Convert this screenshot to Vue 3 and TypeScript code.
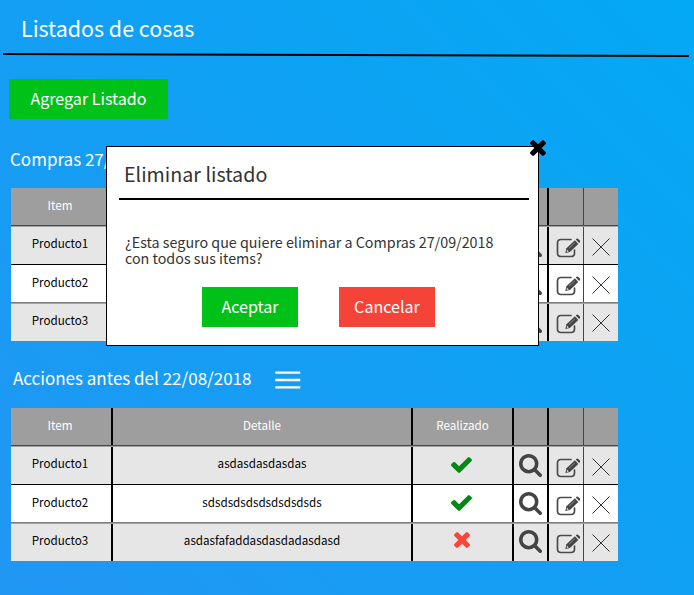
<script setup lang="ts">
interface Item {
  name: string
  detail: string
  done: boolean
}

interface Listing {
  title: string
  items: Item[]
}

const items: Item[] = [
  { name: 'Producto1', detail: 'asdasdasdasdas', done: true },
  { name: 'Producto2', detail: 'sdsdsdsdsdsdsdsdsds', done: true },
  { name: 'Producto3', detail: 'asdasfafaddasdasdadasdasd', done: false },
]

const listings: Listing[] = [
  { title: 'Compras 27/09/2018', items },
  { title: 'Acciones antes del 22/08/2018', items },
]

const crossPath =
  'M1298 1322q0 40-28 68l-136 136q-28 28-68 28t-68-28l-294-294-294 294q-28 28-68 28t-68-28l-136-136q-28-28-28-68t28-68l294-294-294-294q-28-28-28-68t28-68l136-136q28-28 68-28t68 28l294 294 294-294q28-28 68-28t68 28l136 136q28 28 28 68t-28 68l-294 294 294 294q28 28 28 68z'
const checkPath =
  'M1671 566q0 40-28 68l-724 724-136 136q-28 28-68 28t-68-28l-136-136-362-362q-28-28-28-68t28-68l136-136q28-28 68-28t68 28l294 295 656-657q28-28 68-28t68 28l136 136q28 28 28 68z'
const searchPath =
  'M1152 704q0-185-131.500-316.500t-316.500-131.500-316.500 131.500-131.500 316.500 131.500 316.500 316.500 131.500 316.500-131.500 131.500-316.500zm512 832q0 52-38 90t-90 38q-54 0-90-38l-343-342q-179 124-399 124-143 0-273.500-55.500t-225-150-150-225-55.500-273.500 55.500-273.500 150-225 225-150 273.500-55.500 273.500 55.500 225 150 150 225 55.500 273.500q0 220-124 399l343 343q37 37 37 90z'
</script>

<template>
  <main class="page">
    <header class="top">
      <h1>Listados de cosas</h1>
      <svg class="rule" width="694" height="6" viewBox="0 0 694 6">
        <path d="M3 1.900L689 4" stroke="#000" stroke-width="2" />
      </svg>
    </header>

    <button class="btn add">Agregar Listado</button>

    <section v-for="(listing, index) in listings" :key="listing.title" class="listing" :class="{ second: index === 1 }">
      <div class="listing-head">
        <h2>{{ listing.title }}</h2>
        <svg class="menu" width="26" height="20" viewBox="0 0 26 20">
          <path d="M.3 2.600H25.300M.3 10H25.300M.3 17.400H25.300" stroke="#fff" stroke-width="2.400" />
        </svg>
      </div>
      <div class="table">
        <div class="row head">
          <span class="cell">Item</span>
          <span class="cell detail">Detalle</span>
          <span class="cell">Realizado</span>
          <span class="cell"></span>
          <span class="cell"></span>
          <span class="cell"></span>
        </div>
        <div v-for="item in listing.items" :key="item.name" class="row">
          <span class="cell">{{ item.name }}</span>
          <span class="cell detail">{{ item.detail }}</span>
          <span class="cell status">
            <svg v-if="item.done" width="21" height="16" viewBox="121 334 1550 1188" preserveAspectRatio="none">
              <path :d="checkPath" fill="#008a14" />
            </svg>
            <svg v-else width="16" height="16" viewBox="110 366 1188 1188">
              <path :d="crossPath" fill="#f94638" />
            </svg>
          </span>
          <span class="cell search">
            <svg width="23" height="23" viewBox="0 0 1664 1664">
              <path :d="searchPath" fill="#444" />
            </svg>
          </span>
          <span class="cell edit">
            <svg width="25" height="20" viewBox="0 0 25 20">
              <path d="M15 1.500H5Q1.500 1.500 1.500 5V15Q1.500 18.500 5 18.500H15Q18.500 18.500 18.500 15V12" fill="none" stroke="#4b4b4b" stroke-width="1.700" stroke-linecap="round" />
              <path d="M9.300 15L10.400 10.200L18.900 2.300L22.300 6L13.900 13.900Z" fill="#444" />
              <path d="M19.800 1.500L20.500.8Q21.400 0 22.300.9L23.800 2.500Q24.600 3.400 23.800 4.300L23.100 5Z" fill="#444" />
              <path d="M13 10.200L18.800 4.800" stroke="#aaa" stroke-width=".7" />
              <path d="M10.800 11.600L12.900 13.500L10.800 14Z" fill="#ddd" />
            </svg>
          </span>
          <span class="cell remove">
            <svg width="18" height="18" viewBox="0 0 18 18">
              <path d="M.5.500L17.500 17.500M17.500.500L.5 17.500" stroke="#333" stroke-width="1" />
            </svg>
          </span>
        </div>
      </div>
    </section>

    <div class="modal" role="dialog">
      <svg class="close" width="16" height="16" viewBox="110 366 1188 1188">
        <path :d="crossPath" />
      </svg>
      <h3>Eliminar listado</h3>
      <p>¿Esta seguro que quiere eliminar a Compras 27/09/2018<br />con todos sus items?</p>
      <div class="actions">
        <button class="btn">Aceptar</button>
        <button class="btn cancel">Cancelar</button>
      </div>
    </div>
  </main>
</template>

<style>
body {
  margin: 0;
  overflow: hidden;
}
</style>

<style scoped>
.page {
  position: relative;
  box-sizing: border-box;
  width: 694px;
  height: 595px;
  overflow: hidden;
  background: linear-gradient(45deg, #2196f3, #03a9f4);
  color: #fff;
  font-family: 'Noto Sans CJK SC', 'Noto Sans', sans-serif;
}

h1,
h2,
h3,
p {
  margin: 0;
  font-weight: 400;
  white-space: nowrap;
}

.top {
  height: 79px;
}

h1 {
  box-sizing: border-box;
  height: 52px;
  padding: 8px 0 0 21px;
  font-size: 21.450px;
  line-height: 40px;
}

.rule {
  display: block;
}

.btn {
  display: block;
  width: 96px;
  height: 40px;
  padding: 0 0 2px;
  border: 0;
  background: #00c117;
  color: #fff;
  font-family: inherit;
  font-size: 16.100px;
  line-height: 38px;
  text-align: center;
}

.add {
  width: 159px;
  margin-left: 9px;
}

.listing {
  padding: 22px 0 0 11px;
}

.listing-head {
  display: flex;
  align-items: center;
  gap: 24px;
  height: 47px;
  margin-left: -1px;
}

.second {
  padding-top: 20px;
}

.second .listing-head {
  margin-left: 2px;
}

h2 {
  padding-bottom: 12px;
  font-size: 17px;
  line-height: 37px;
}

.second h2 {
  padding-bottom: 14px;
}

.menu {
  margin-bottom: 9px;
}

.table {
  width: 607px;
  height: 153px;
}

.row {
  display: grid;
  grid-template-columns: 102px 300px 101px 35px 35px 34px;
  box-sizing: border-box;
  height: 38px;
  background: #e6e6e6;
  color: #000;
  font-size: 11.630px;
}

.row:nth-child(2) {
  height: 39px;
  border-top: 1px solid #a0a4a6;
  border-bottom: 1px solid #000;
}

.row:nth-child(3) {
  background: #fff;
  border-bottom: 1px solid #7d7d7d;
}

.row:nth-child(4) {
  border-top: 1px solid #a3a3a3;
}

.row.head {
  background: #9e9e9e;
  border-bottom: 1px solid #454a4c;
  color: #fff;
}

.cell {
  display: flex;
  align-items: center;
  justify-content: center;
  box-sizing: border-box;
  padding: 0 2px 4px 0;
  border-right: 2px solid #000;
}

.row:nth-child(2) .cell,
.row:nth-child(4) .cell {
  padding-bottom: 6px;
}

.row .cell.detail {
  padding-right: 0;
}

.cell:nth-child(3) {
  padding-right: 0;
}

.row .cell.status {
  padding: 0 2px 2px 0;
}

.row:nth-child(4) .cell.status {
  padding-bottom: 6px;
}

.cell:nth-child(5) {
  border-right: 1px solid #444;
}

.cell:last-child {
  border-right: 0;
}

.row .cell.search {
  padding: 0;
}

.row:nth-child(4) .cell.search {
  padding-bottom: 2px;
}

.row .cell.edit {
  padding: 4px 0 0 4px;
}

.row .cell.remove {
  padding: 3px 0 0;
}

.row:nth-child(4) .cell.edit {
  padding-top: 2px;
}

.row:nth-child(4) .cell.remove {
  padding-top: 1px;
}

.modal {
  position: absolute;
  top: 146px;
  left: 106px;
  box-sizing: border-box;
  width: 433px;
  height: 200px;
  padding: 0 9px 0 12px;
  background: #fff;
  border: 1px solid #000;
  color: #333;
}

.close {
  position: absolute;
  top: -7px;
  right: -8px;
}

h3 {
  height: 51px;
  padding-left: 5px;
  border-bottom: 2px solid #000;
  font-size: 19.700px;
  line-height: 54px;
}

p {
  padding: 34px 0 1px 6px;
  font-size: 14.300px;
  line-height: 16px;
}

.actions {
  display: flex;
  gap: 41px;
  padding: 20px 0 0 83px;
}

.cancel {
  background: #f64337;
}
</style>
